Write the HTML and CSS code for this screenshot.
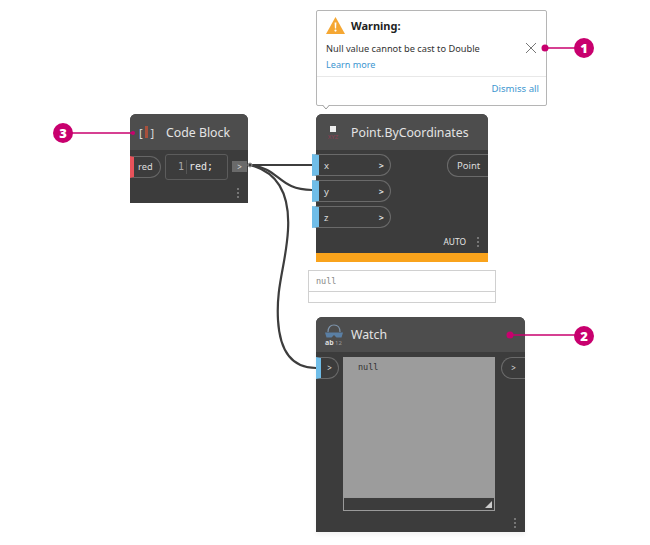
FILE: index.html
```html
<!DOCTYPE html>
<html lang="en">
<head>
<meta charset="utf-8">
<title>Warning and Watch nodes</title>
<link rel="stylesheet" href="styles.css">
</head>
<body>
<main class="canvas">
  <svg class="wires" width="650" height="545" viewBox="0 0 650 545" aria-hidden="true">
    <path class="wire" d="M250 165C280 165 285 165 312 165"/>
    <path class="wire" d="M250 165C280 168 278 190 312 190"/>
    <path class="wire" d="M250 165C278 172 290 195 288 230C286 265 276 285 278 320C280 355 295 368 316 368"/>
    <circle class="wire-end" cx="250" cy="165" r="2"/>
    <path class="callout-line" d="M543 48H584"/>
    <circle class="callout-dot" cx="545" cy="48" r="3.5"/>
    <path class="callout-line" d="M510 335H584"/>
    <circle class="callout-dot" cx="510" cy="335" r="3.5"/>
    <path class="callout-line" d="M63 133H133"/>
    <circle class="callout-dot" cx="133" cy="133" r="2"/>
  </svg>

  <section class="warning">
    <div class="warning-body">
      <h2 class="warning-title">
        <svg class="warning-icon" width="19" height="17" viewBox="0 0 19 17" aria-hidden="true">
          <path d="M9.5 0L19 17H0Z" fill="#f5a733"/>
          <path d="M8.6 5.5H10.4L10.1 11.5H8.9Z" fill="#fff"/>
          <circle cx="9.5" cy="13.6" r="1.1" fill="#fff"/>
        </svg>
        Warning:
      </h2>
      <div class="warning-message">
        <p class="warning-text">Null value cannot be cast to Double</p>
        <svg class="close" width="12" height="12" viewBox="0 0 12 12" aria-hidden="true">
          <path d="M1 1L11 11M11 1L1 11" stroke="#777" stroke-width="1" fill="none"/>
        </svg>
      </div>
      <a class="warning-link">Learn more</a>
    </div>
    <div class="warning-foot"><a class="warning-link dismiss">Dismiss all</a></div>
  </section>
  <svg class="warning-tip" width="8" height="5" viewBox="0 0 8 5" aria-hidden="true"><path d="M0.5 0L4 4L7.5 0" fill="#fff" stroke="#999"/></svg>

  <article class="node code-node">
    <header class="node-head">
      <span class="code-icon">[<i class="code-bar"></i>]</span>
      <span class="node-title">Code Block</span>
    </header>
    <div class="code-row">
      <span class="code-port">red</span>
      <span class="code-editor"><span class="ln">1</span><span class="code-text">red;</span></span>
      <span class="code-out">&gt;</span>
    </div>
    <div class="node-foot"><span class="dots"><i></i><i></i><i></i></span></div>
  </article>

  <article class="node point-node">
    <header class="node-head">
      <span class="point-icon"><i class="point-square"></i><span class="xyz">XYZ</span></span>
      <span class="node-title">Point.ByCoordinates</span>
    </header>
    <div class="point-body">
      <div class="point-inputs">
        <div class="in-port"><span>x</span><b>&gt;</b></div>
        <div class="in-port"><span>y</span><b>&gt;</b></div>
        <div class="in-port"><span>z</span><b>&gt;</b></div>
      </div>
      <div class="out-port">Point</div>
    </div>
    <div class="point-foot"><span class="auto">AUTO</span><span class="dots"><i></i><i></i><i></i></span></div>
    <div class="warn-bar"></div>
  </article>

  <section class="preview">
    <div class="preview-value">null</div>
    <div class="preview-empty"></div>
  </section>

  <article class="node watch-node">
    <header class="node-head">
      <svg class="watch-icon" width="20" height="22" viewBox="0 0 20 22" aria-hidden="true">
        <path d="M4 8C4 3 7 1 10 1S16 3 16 8" fill="none" stroke="#7d93aa" stroke-width="1.2"/>
        <path d="M1 8.5H19L17.5 13.5H12.5L10 11L7.5 13.5H2.5Z" fill="#5a7fa4"/>
        <text class="watch-ab" x="1" y="21">ab</text>
        <text class="watch-num" x="11" y="21">12</text>
      </svg>
      <span class="node-title">Watch</span>
    </header>
    <div class="watch-body">
      <div class="watch-in"><span class="w-port">&gt;</span></div>
      <div class="watch-main">
        <div class="watch-view">null</div>
        <div class="watch-bar"><svg width="7" height="7" viewBox="0 0 7 7" aria-hidden="true"><path d="M7 0V7H0Z" fill="#ccc"/></svg></div>
      </div>
      <div class="watch-out"><span class="w-port-out">&gt;</span></div>
    </div>
    <div class="node-foot watch-foot"><span class="dots"><i></i><i></i><i></i></span></div>
  </article>

  <span class="badge badge-1">1</span>
  <span class="badge badge-2">2</span>
  <span class="badge badge-3">3</span>
</main>
</body>
</html>
```
FILE: styles.css
```css
* { box-sizing: border-box; }
html, body { margin: 0; padding: 0; background: #fff; }
body { font-family: "Noto Sans", "Open Sans", sans-serif; overflow: hidden; }
.canvas { position: relative; width: 650px; height: 545px; overflow: hidden; }
.wires { position: absolute; left: 0; top: 0; z-index: 3; }
.wire { fill: none; stroke: #3d3d3d; stroke-width: 2.2; }
.wire-end { fill: #3d3d3d; stroke: #999; stroke-width: 1; }
.callout-line { fill: none; stroke: #c8006e; stroke-width: 1.6; }
.callout-dot { fill: #c8006e; }

.warning {
  position: absolute; left: 316px; top: 10px; width: 231px; height: 96px;
  background: #fff; border: 1px solid #b5b5b5; border-radius: 2px;
  display: flex; flex-direction: column; z-index: 1;
}
.warning-body { height: 66px; padding: 3px 9px 0 9px; border-bottom: 1px solid #e8e8e8; flex: none; }
.warning-title {
  margin: 0; height: 22px; display: flex; align-items: center; gap: 6px;
  font-size: 11px; font-weight: 700; color: #222;
}
.warning-icon { flex: none; }
.warning-message { display: flex; justify-content: space-between; align-items: center; height: 16px; margin-top: 4px; }
.warning-text { margin: 0; font-size: 9.25px; color: #333; }
.close { flex: none; }
.warning-link { display: block; font-size: 9.1px; color: #3c96d0; margin-top: 2px; line-height: 14px; }
.warning-link.dismiss { font-size: 9.6px; margin: 0; }
.warning-foot { flex: 1; display: flex; justify-content: flex-end; align-items: center; padding: 0 7px 4px 0; }
.warning-tip { position: absolute; left: 322px; top: 105px; z-index: 2; }

.node { position: absolute; background: #3c3c3c; color: #e5e5e5; border-radius: 6px 6px 0 0; display: flex; flex-direction: column; }
.node-head { height: 36px; flex: none; background: #4d4d4d; border-radius: 6px 6px 0 0; display: flex; align-items: center; }
.node-title { font-size: 12.3px; color: #e4e4e4; white-space: nowrap; }
.dots { display: flex; flex-direction: column; gap: 2px; }
.dots i { display: block; width: 2px; height: 2px; border-radius: 50%; background: #8a8a8a; }
.node-foot { flex: 1; display: flex; justify-content: flex-end; align-items: center; padding-right: 9px; }

.code-node { left: 130px; top: 114px; width: 118px; height: 89px; }
.code-node .node-head { padding-left: 9px; gap: 12px; }
.code-icon { display: flex; width: 15px; justify-content: space-between; align-items: center; font-size: 11px; color: #ddd; }
.code-bar { display: block; width: 3px; height: 12px; background: #a8503c; }
.code-row { display: flex; align-items: center; height: 31px; margin-top: 1px; }
.code-port {
  width: 31px; height: 22px; background: #3c3c3c; border: 1px solid #666; border-left: 4px solid #e8525a;
  border-radius: 0 11px 11px 0; font-size: 9.3px; line-height: 20px; padding-left: 4px; color: #ddd; flex: none;
}
.code-editor {
  width: 63px; height: 26px; margin-left: 4px; border: 1px solid #5c5c5c; border-radius: 3px; display: flex; align-items: center;
  font-family: "DejaVu Sans Mono", monospace; font-size: 10px; flex: none;
}
.ln { width: 21px; text-align: right; padding-right: 2px; color: #aaa; border-right: 1px solid #555; line-height: 14px; flex: none; }
.code-text { padding-left: 2px; color: #e8e8e8; }
.code-out { width: 15px; height: 11px; margin-left: 4px; background: #6a6a6a; color: #ddd; font-size: 8px; line-height: 11px; text-align: center; flex: none; }

.point-node { left: 316px; top: 114px; width: 172px; height: 148px; }
.point-node .node-head { padding-left: 13px; gap: 14px; }
.point-icon { width: 8px; display: flex; flex-direction: column; align-items: center; gap: 2px; margin-top: 2px; }
.point-square { display: block; width: 6px; height: 6px; background: #eee; flex: none; }
.xyz { font-size: 6px; line-height: 6px; color: #8f3d52; }
.point-body { display: flex; justify-content: space-between; align-items: flex-start; padding-top: 4px; height: 76px; flex: none; }
.point-inputs { display: flex; flex-direction: column; gap: 4px; margin-left: -4px; z-index: 4; }
.in-port {
  width: 79px; height: 22px; background: #3c3c3c; border: 1px solid #6a6a6a; border-left: 7px solid #6fbde8;
  border-radius: 0 11px 11px 0; display: flex; justify-content: space-between; align-items: center;
  padding: 0 6px 0 5px; font-size: 9.5px; color: #ddd;
}
.in-port b { font-size: 9px; font-weight: 700; }
.out-port { width: 41px; height: 23px; border: 1px solid #6a6a6a; border-right: 0; border-radius: 11px 0 0 11px; font-size: 9.5px; line-height: 21px; padding-left: 9px; color: #ddd; }
.point-foot { flex: 1; display: flex; justify-content: flex-end; align-items: center; gap: 11px; padding-right: 9px; padding-top: 4px; }
.auto { font-size: 8.4px; color: #e8e8e8; }
.warn-bar { height: 9px; background: #f9a31c; flex: none; }

.preview { position: absolute; left: 308px; top: 270px; width: 188px; height: 33px; border: 1px solid #d0d0d0; background: #fff; }
.preview-value { height: 21px; border-bottom: 1px solid #d0d0d0; font-family: "DejaVu Sans Mono", monospace; font-size: 8.5px; line-height: 20px; color: #888; padding-left: 7px; }

.watch-node { left: 316px; top: 317px; width: 209px; height: 215px; box-shadow: 0 3px 4px rgba(0,0,0,.05); }
.watch-node .node-head { height: 35px; padding-left: 8px; gap: 7px; }
.watch-ab { font-size: 7px; font-weight: 700; fill: #ddd; font-family: "Noto Sans", sans-serif; }
.watch-num { font-size: 6px; fill: #999; font-family: "Noto Sans", sans-serif; }
.watch-body { display: flex; padding-top: 5px; height: 159px; flex: none; }
.watch-in { width: 27px; flex: none; }
.w-port {
  display: block; width: 23px; height: 22px; border: 1px solid #6a6a6a; border-left: 5px solid #6fbde8;
  border-radius: 0 11px 11px 0; font-size: 8px; line-height: 20px; text-align: center; color: #ddd;
}
.watch-main { width: 152px; flex: none; }
.watch-view { height: 140px; background: #9c9c9c; font-family: "DejaVu Sans Mono", monospace; font-size: 8.5px; color: #333; padding: 5px 0 0 15px; line-height: 10px; }
.watch-bar { height: 14px; border: 1px solid #9a9a9a; display: flex; justify-content: flex-end; align-items: flex-end; padding: 0 2px 2px 0; }
.watch-bar svg { display: block; }
.watch-out { flex: 1; display: flex; justify-content: flex-end; }
.w-port-out { display: block; width: 24px; height: 22px; border: 1px solid #6a6a6a; border-right: 0; border-radius: 11px 0 0 11px; font-size: 8px; line-height: 20px; text-align: center; color: #ddd; }
.watch-foot { padding-right: 9px; padding-top: 3px; }

.badge {
  position: absolute; width: 20px; height: 20px; border-radius: 50%; background: #c8006e; color: #fff;
  font-size: 13px; font-weight: 800; line-height: 20px; text-align: center; z-index: 4;
  font-family: "Open Sans", sans-serif;
}
.badge-1 { left: 574px; top: 38px; }
.badge-2 { left: 574px; top: 326px; }
.badge-3 { left: 53px; top: 123px; }
```
